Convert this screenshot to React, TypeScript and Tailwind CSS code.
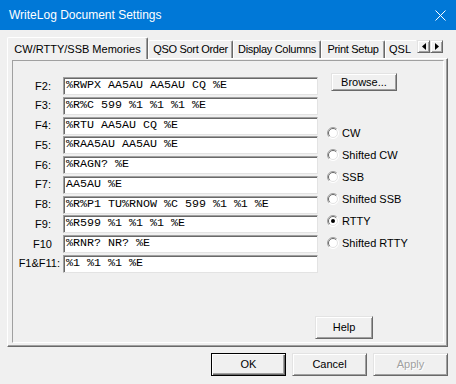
import React from "react";

const rows: { label: string; value: string; pr: string }[] = [
  { label: "F2:", value: "%RWPX AA5AU AA5AU CQ %E", pr: "pr-[12px]" },
  { label: "F3:", value: "%R%C 599 %1 %1 %1 %E", pr: "pr-[12px]" },
  { label: "F4:", value: "%RTU AA5AU CQ %E", pr: "pr-[12px]" },
  { label: "F5:", value: "%RAA5AU AA5AU %E", pr: "pr-[12px]" },
  { label: "F6:", value: "%RAGN? %E", pr: "pr-[12px]" },
  { label: "F7:", value: "AA5AU %E", pr: "pr-[12px]" },
  { label: "F8:", value: "%R%P1 TU%RNOW %C 599 %1 %1 %E", pr: "pr-[12px]" },
  { label: "F9:", value: "%R599 %1 %1 %1 %E", pr: "pr-[12px]" },
  { label: "F10", value: "%RNR? NR? %E", pr: "pr-[11px]" },
  { label: "F1&F11:", value: "%1 %1 %1 %E", pr: "pr-[3px]" },
];

const radios = ["CW", "Shifted CW", "SSB", "Shifted SSB", "RTTY", "Shifted RTTY"];

function Radio({ checked }: { checked: boolean }) {
  return (
    <svg width="12" height="12" viewBox="0 0 12 12" className="shrink-0">
      <circle cx="6" cy="6" r="5.5" fill="#ffffff" />
      <path d="M2.1 9.9 A5.5 5.5 0 0 1 9.9 2.1" stroke="#a0a0a0" strokeWidth="1" fill="none" />
      <path d="M2.8 9.2 A4.5 4.5 0 0 1 9.2 2.8" stroke="#696969" strokeWidth="1" fill="none" />
      <path d="M9.9 2.1 A5.5 5.5 0 0 1 2.1 9.9" stroke="#ffffff" strokeWidth="1" fill="none" />
      <path d="M9.2 2.8 A4.5 4.5 0 0 1 2.8 9.2" stroke="#e3e3e3" strokeWidth="1" fill="none" />
      {checked && <circle cx="6" cy="6" r="2" fill="#000000" />}
    </svg>
  );
}

const btn =
  "flex items-center justify-center bg-[#f0f0f0] border border-t-[#e3e3e3] border-l-[#e3e3e3] border-r-[#696969] border-b-[#696969] shadow-[inset_1px_1px_0_#ffffff,inset_-1px_-1px_0_#a0a0a0] text-[11px] text-black";

export default function App() {
  return (
    <div
      className="w-[456px] h-[384px] bg-[#f0f0f0] flex flex-col overflow-hidden"
      style={{ fontFamily: '"Liberation Sans", Arial, sans-serif' }}
    >
      {/* Title bar */}
      <div className="h-[30px] bg-[#0078d7] flex items-center justify-between pl-[9px] pr-[10px] shrink-0">
        <span className="text-white text-[12px] leading-none">WriteLog Document Settings</span>
        <svg width="11" height="11" viewBox="0 0 11 11">
          <path d="M0.5 0.5 L10.5 10.5 M10.5 0.5 L0.5 10.5" stroke="#ffffff" strokeWidth="1" />
        </svg>
      </div>

      {/* Tab strip */}
      <div className="h-[28px] flex items-end pl-[7px] shrink-0">
        <div className="relative z-10 h-[22px] -mb-[1px] w-[141px] bg-[#f0f0f0] border-l border-t border-l-white border-t-white border-r border-r-[#696969] shadow-[inset_-1px_0_0_#a0a0a0] rounded-t-[2px] flex items-start justify-center pt-[3px] text-[11px] text-black whitespace-nowrap">
          CW/RTTY/SSB Memories
        </div>
        <div className="h-[18px] w-[85px] border-l border-t border-l-white border-t-white border-r border-r-[#696969] shadow-[inset_-1px_0_0_#a0a0a0] rounded-t-[2px] flex items-center justify-center text-[11px] tracking-[-0.3px] text-black whitespace-nowrap overflow-hidden">
          QSO Sort Order
        </div>
        <div className="h-[18px] w-[88px] border-l border-t border-l-white border-t-white border-r border-r-[#696969] shadow-[inset_-1px_0_0_#a0a0a0] rounded-t-[2px] flex items-center justify-center text-[11px] tracking-[-0.3px] text-black whitespace-nowrap overflow-hidden">
          Display Columns
        </div>
        <div className="h-[18px] w-[64px] border-l border-t border-l-white border-t-white border-r border-r-[#696969] shadow-[inset_-1px_0_0_#a0a0a0] rounded-t-[2px] flex items-center justify-center text-[11px] tracking-[-0.3px] text-black whitespace-nowrap overflow-hidden">
          Print Setup
        </div>
        <div className="h-[18px] w-[31px] border-l border-t border-l-white border-t-white flex items-center pl-[3px] text-[11px] text-black whitespace-nowrap">
          QSL
        </div>
        <div className="flex self-end mb-[5px] ml-[1px]">
          <div className={btn + " w-[13px] h-[13px]"}>
            <svg width="4" height="7" viewBox="0 0 4 7">
              <path d="M4 0 L0 3.5 L4 7 Z" fill="#000" />
            </svg>
          </div>
          <div className={btn + " w-[13px] h-[13px]"}>
            <svg width="4" height="7" viewBox="0 0 4 7">
              <path d="M0 0 L4 3.5 L0 7 Z" fill="#000" />
            </svg>
          </div>
        </div>
      </div>

      {/* Tab panel */}
      <div className="ml-[7px] w-[441px] h-[289px] shrink-0 border-l border-t border-l-white border-t-white border-r border-b border-r-[#696969] border-b-[#696969] shadow-[inset_-1px_-1px_0_#a0a0a0] pt-[1px] pl-[4px] pr-[3px] pb-[3px] flex">
        <div className="flex-1 flex border border-t-[#a0a0a0] border-l-[#a0a0a0] border-r-white border-b-white">
          {/* Fields */}
          <div className="w-[305px] pt-[16px] flex flex-col gap-[1.75px]">
            {rows.map((r) => (
              <div key={r.label} className="flex items-center h-[18px]">
                <div className={"w-[50px] text-right text-[11px] text-black whitespace-nowrap leading-none " + r.pr}>
                  {r.label}
                </div>
                <div
                  className="w-[255px] h-[18px] bg-white border border-t-[#a0a0a0] border-l-[#a0a0a0] border-r-[#e3e3e3] border-b-[#e3e3e3] shadow-[inset_1px_1px_0_#696969] pl-[2px] flex items-center text-[11.67px] text-black whitespace-pre leading-none"
                  style={{ fontFamily: '"Liberation Mono", "Courier New", monospace' }}
                >
                  {r.value}
                </div>
              </div>
            ))}
          </div>
          {/* Right column */}
          <div className="flex-1 flex flex-col">
            <div className={btn + " mt-[12px] ml-[13px] w-[66px] h-[18px]"}>Browse...</div>
            <div className="mt-[31px] ml-[9px] flex flex-col">
              {radios.map((r) => (
                <div key={r} className="h-[22px] flex items-center gap-[3px] text-[11px] text-black">
                  <Radio checked={r === "RTTY"} />
                  <span>{r}</span>
                </div>
              ))}
            </div>
            <div className={btn + " mt-auto mb-[3px] -ml-[3px] w-[58px] h-[23px]"}>Help</div>
          </div>
        </div>
      </div>

      {/* Bottom buttons */}
      <div className="flex justify-end gap-[6px] pr-[8px] mt-[6px]">
        <div className="w-[75px] h-[23px] flex items-center justify-center bg-[#f0f0f0] border border-black shadow-[inset_1px_1px_0_#ffffff,inset_-1px_-1px_0_#696969,inset_-2px_-2px_0_#a0a0a0] text-[11px] text-black">
          OK
        </div>
        <div className={btn + " w-[75px] h-[23px]"}>Cancel</div>
        <div className={btn + " w-[75px] h-[23px] !text-[#a0a0a0] [text-shadow:1px_1px_0_#ffffff]"}>Apply</div>
      </div>
    </div>
  );
}
